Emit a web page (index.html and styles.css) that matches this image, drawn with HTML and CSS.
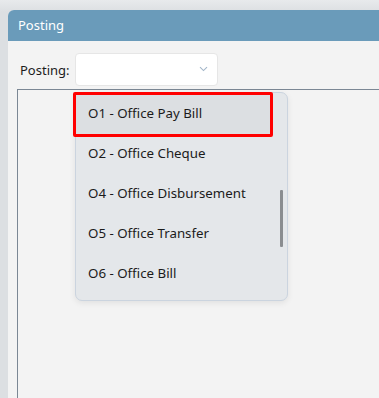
FILE: index.html
```html
<!DOCTYPE html>
<html>
<head>
<meta charset="utf-8">
<link rel="stylesheet" href="styles.css">
</head>
<body>
<div class="window">
  <div class="titlebar">Posting</div>
  <div class="content">
    <div class="row">
      <span class="label">Posting:</span>
      <div class="combo">
        <svg class="chev" width="9" height="6" viewBox="0 0 9 6"><path d="M1 1.2 L4.5 4.6 L8 1.2" fill="none" stroke="#a3b6c9" stroke-width="1.1"/></svg>
      </div>
    </div>
    <div class="listbox"></div>
  </div>
</div>
<div class="popup">
  <div class="item selected">O1 - Office Pay Bill</div>
  <div class="item">O2 - Office Cheque</div>
  <div class="item">O4 - Office Disbursement</div>
  <div class="item">O5 - Office Transfer</div>
  <div class="item">O6 - Office Bill</div>
  <div class="scrollthumb"></div>
</div>
<div class="redbox"></div>
</body>
</html>
```
FILE: styles.css
```css
html, body {
  margin: 0;
  padding: 0;
  height: 100%;
  overflow: hidden;
}
body {
  background: linear-gradient(#e8eaec, #dcdfe2 12px);
  font-family: "Noto Sans", "Open Sans", sans-serif;
  color: #1b1b1b;
  padding: 10px 0 0 8px;
  box-sizing: border-box;
}
.window {
  height: 100%;
  background: #f3f3f3;
  border-top-left-radius: 6px;
  overflow: hidden;
  display: flex;
  flex-direction: column;
}
.titlebar {
  height: 31px;
  background: #6a9bba;
  color: #ffffff;
  font-size: 13px;
  line-height: 31px;
  padding-left: 10px;
  flex: none;
}
.content {
  flex: 1;
  display: flex;
  flex-direction: column;
  padding: 12px 0 0 9px;
}
.row {
  display: flex;
  align-items: center;
  height: 33px;
}
.label {
  font-size: 13px;
  margin-left: 3px;
  width: 55px;
}
.combo {
  width: 141px;
  height: 31px;
  background: #ffffff;
  border: 1px solid #e6e6e6;
  border-radius: 4px;
  position: relative;
}
.chev {
  position: absolute;
  left: 123px;
  top: 12px;
}
.listbox {
  flex: 1;
  margin-top: 3px;
  border-left: 1px solid #7b8794;
  border-top: 1px solid #7b8794;
}
.popup {
  position: absolute;
  left: 75px;
  top: 92px;
  width: 211px;
  height: 206px;
  background: #e4e7ea;
  border: 1px solid #cbd4df;
  border-radius: 7px;
  box-shadow: 0 2px 6px rgba(0,0,0,0.08);
  padding-top: 1px;
  box-sizing: content-box;
}
.item {
  height: 40px;
  line-height: 39px;
  padding-left: 12px;
  font-size: 13.3px;
  margin-right: 16px;
}
.item.selected {
  background: #dcdfe2;
}
.scrollthumb {
  position: absolute;
  left: 204px;
  top: 97px;
  width: 3px;
  height: 57px;
  background: #8a8d90;
  border-radius: 1px;
}
.redbox {
  position: absolute;
  left: 73px;
  top: 92px;
  width: 194px;
  height: 39px;
  border: 3px solid #ff0000;
  border-radius: 2px;
}
```
